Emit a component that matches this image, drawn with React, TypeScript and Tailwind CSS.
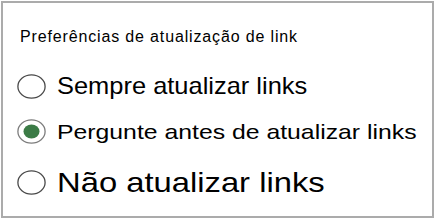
import React from 'react';

type Option = {
  label: string;
  textClass: string;
  rowClass: string;
  checked?: boolean;
};

const options: Option[] = [
  {
    label: 'Sempre atualizar links',
    textClass: 'text-[24px] scale-x-[1.06]',
    rowClass: 'mt-[26px] h-[28px]',
  },
  {
    label: 'Pergunte antes de atualizar links',
    textClass: 'text-[21px] scale-x-[1.18]',
    rowClass: 'mt-[18px] h-[27px]',
    checked: true,
  },
  {
    label: 'Não atualizar links',
    textClass: 'text-[28px] scale-x-[1.17]',
    rowClass: 'mt-[23px] h-[29px]',
  },
];

const Radio = ({ checked }: { checked?: boolean }) => (
  <svg width="29" height="25" viewBox="0 0 29 25" className="shrink-0">
    <ellipse
      cx="14.5"
      cy="12.5"
      rx="13.6"
      ry="11.6"
      fill="white"
      stroke={checked ? '#7d7d7d' : '#4a4a4a'}
      strokeWidth="1.3"
    />
    {checked && <ellipse cx="14.5" cy="12.5" rx="8" ry="7" fill="#3b7b46" />}
  </svg>
);

export default function App() {
  return (
    <div className="m-px h-[217px] w-[433px] overflow-hidden border-2 border-[#ababab] bg-white pl-[14px] pt-[25px] font-['Liberation_Sans',Arial,sans-serif] text-black">
      <div className="ml-[3px] w-fit text-[16px] leading-[18px] tracking-[0.85px] whitespace-nowrap">
        Preferências de atualização de link
      </div>
      {options.map((o) => (
        <div key={o.label} className={`flex items-center gap-[11px] ${o.rowClass}`}>
          <Radio checked={o.checked} />
          <span className={`origin-left leading-none whitespace-nowrap ${o.textClass}`}>{o.label}</span>
        </div>
      ))}
    </div>
  );
}
